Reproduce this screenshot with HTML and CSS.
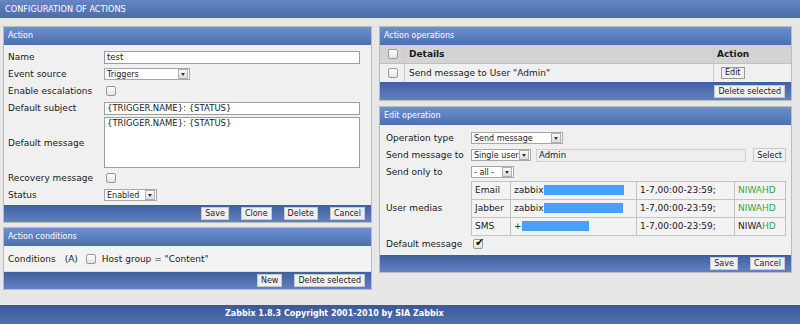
FILE: index.html
```html
<!DOCTYPE html>
<html lang="en">
<head>
  <meta charset="UTF-8">
  <title>Configuration of actions</title>
  <link rel="stylesheet" href="styles.css">
</head>
<body>

  <div class="topbar">CONFIGURATION OF ACTIONS</div>

  <div class="page">
    <div class="col col-left">

      <div class="panel">
        <div class="panel-head">Action</div>
        <div class="form action-form">
          <div class="label">Name</div>
          <div><span class="input wide">test</span></div>

          <div class="label">Event source</div>
          <div><span class="select" style="width:86px">Triggers<span class="arr"></span></span></div>

          <div class="label">Enable escalations</div>
          <div><span class="check"></span></div>

          <div class="label">Default subject</div>
          <div><span class="input wide">{TRIGGER.NAME}: {STATUS}</span></div>

          <div class="label">Default message</div>
          <div class="top"><div class="textarea">{TRIGGER.NAME}: {STATUS}</div></div>

          <div class="label">Recovery message</div>
          <div><span class="check"></span></div>

          <div class="label">Status</div>
          <div><span class="select" style="width:53px">Enabled<span class="arr"></span></span></div>
        </div>
        <div class="panel-foot">
          <button class="btn">Save</button>
          <button class="btn">Clone</button>
          <button class="btn">Delete</button>
          <button class="btn">Cancel</button>
        </div>
      </div>

      <div class="panel">
        <div class="panel-head">Action conditions</div>
        <div class="cond-row">
          <span>Conditions</span>
          <span class="cond-a">(A)</span>
          <span class="check"></span>
          <span>Host group = "Content"</span>
        </div>
        <div class="panel-foot">
          <button class="btn">New</button>
          <button class="btn">Delete selected</button>
        </div>
      </div>

    </div>

    <div class="col col-right">

      <div class="panel">
        <div class="panel-head">Action operations</div>
        <div class="ops">
          <div class="ops-row ops-head">
            <div class="c1"><span class="check"></span></div>
            <div class="c2">Details</div>
            <div class="c3">Action</div>
          </div>
          <div class="ops-row">
            <div class="c1"><span class="check"></span></div>
            <div class="c2">Send message to User "Admin"</div>
            <div class="c3"><button class="btn small">Edit</button></div>
          </div>
        </div>
        <div class="panel-foot tight">
          <button class="btn">Delete selected</button>
        </div>
      </div>

      <div class="panel">
        <div class="panel-head">Edit operation</div>
        <div class="form edit-form">
          <div class="label">Operation type</div>
          <div><span class="select" style="width:92px">Send message<span class="arr"></span></span></div>

          <div class="label">Send message to</div>
          <div class="send-to">
            <span class="select" style="width:60px">Single user<span class="arr"></span></span>
            <span class="input ro">Admin</span>
            <button class="btn">Select</button>
          </div>

          <div class="label">Send only to</div>
          <div><span class="select" style="width:43px">- all -<span class="arr"></span></span></div>

          <div class="label">User medias</div>
          <div class="medias">
            <div class="m-type">Email</div>
            <div class="m-addr">zabbix<span class="hide" style="width:80px"></span></div>
            <div class="m-per">1-7,00:00-23:59;</div>
            <div class="m-sev"><span class="ok">NIWAHD</span></div>

            <div class="m-type">Jabber</div>
            <div class="m-addr">zabbix<span class="hide" style="width:79px"></span></div>
            <div class="m-per">1-7,00:00-23:59;</div>
            <div class="m-sev"><span class="ok">NIWAHD</span></div>

            <div class="m-type">SMS</div>
            <div class="m-addr">+<span class="hide" style="width:67px"></span></div>
            <div class="m-per">1-7,00:00-23:59;</div>
            <div class="m-sev">NIWA<span class="ok">HD</span></div>
          </div>

          <div class="label">Default message</div>
          <div><span class="check on">&#10004;</span></div>
        </div>
        <div class="panel-foot">
          <button class="btn">Save</button>
          <button class="btn">Cancel</button>
        </div>
      </div>

    </div>
  </div>

  <div class="footer">Zabbix 1.8.3 Copyright 2001-2010 by SIA Zabbix</div>

</body>
</html>
```

FILE: styles.css
```css
body {
  margin: 0;
  height: 324px;
  overflow: hidden;
  display: flex;
  flex-direction: column;
  font-family: "DejaVu Sans", Verdana, sans-serif;
  font-size: 9px;
  color: #1a1a1a;
  background-color: #e7e7e7;
}

.topbar {
  height: 18px;
  line-height: 18px;
  padding-left: 5px;
  font-size: 8.2px;
  color: white;
  background: linear-gradient(#6585c3, #4b6cab);
}

.page {
  display: flex;
  align-items: flex-start;
  gap: 7px;
  padding: 8px 0 0 3px;
}

.col {
  display: flex;
  flex-direction: column;
}

.col-left {
  width: 369px;
  gap: 4px;
}

.col-right {
  width: 413px;
  gap: 5px;
}

.panel {
  border: 1px solid #bcbcbc;
  background-color: #f0f0f0;
}

.panel-head {
  height: 18px;
  line-height: 18px;
  padding-left: 4px;
  font-size: 8px;
  color: white;
  background: linear-gradient(#6d90d0, #4c6fb0);
}

.panel-foot {
  height: 17px;
  display: flex;
  justify-content: flex-end;
  align-items: center;
  gap: 12px;
  padding-right: 6px;
  background: linear-gradient(#3f5f9f, #6181c0);
}

.panel-foot.tight {
  height: 18px;
  padding-right: 6px;
}

.btn {
  height: 13px;
  padding: 0 3px;
  font-family: inherit;
  font-size: 8px;
  line-height: 11px;
  color: #222;
  background-color: #f0f0f0;
  border: 1px solid #c8c8c8;
  border-radius: 0;
}

.btn.small {
  height: 12px;
  line-height: 10px;
  padding: 0 3px;
  border-color: #999;
}

/* form grids */

.form {
  display: grid;
  align-items: center;
  row-gap: 1px;
}

.action-form {
  grid-template-columns: 96px 1fr;
  grid-template-rows: 16px 16px 16px 16px 52px 16px 16px;
  padding: 4px 11px 2px 4px;
}

.edit-form {
  grid-template-columns: 85px 1fr;
  grid-template-rows: 16px 16px 16px 54px 16px;
  padding: 5px 5px 3px 6px;
}

.label {
  white-space: nowrap;
}

.top {
  align-self: start;
}

.input {
  display: block;
  height: 11px;
  line-height: 11px;
  padding: 0 2px;
  font-size: 8.5px;
  background-color: white;
  border: 1px solid #9d9d9d;
  white-space: nowrap;
}

.input.ro {
  flex: 1;
  background-color: #eeeeee;
  border-color: #d0d0d0;
}

.textarea {
  height: 49px;
  padding: 0 2px;
  font-size: 8.5px;
  background-color: white;
  border: 1px solid #9d9d9d;
}

.select {
  display: flex;
  align-items: center;
  justify-content: space-between;
  box-sizing: border-box;
  height: 12px;
  padding-left: 2px;
  font-size: 8px;
  background-color: white;
  border: 1px solid #a8a8a8;
  white-space: nowrap;
  overflow: hidden;
}

.arr {
  flex: none;
  width: 8px;
  height: 8px;
  margin-right: 1px;
  border: 1px solid #b0b0b0;
  background: linear-gradient(#fafafa, #dcdcdc);
  position: relative;
}

.arr::after {
  content: "";
  position: absolute;
  left: 1.5px;
  top: 3px;
  border-left: 2.5px solid transparent;
  border-right: 2.5px solid transparent;
  border-top: 3px solid #333;
}

.check {
  display: inline-block;
  width: 8px;
  height: 8px;
  margin-left: 2px;
  vertical-align: middle;
  border: 1px solid #999;
  border-radius: 2px;
  background: linear-gradient(#ffffff, #e2e2e2);
  position: relative;
}

.check.on {
  font-size: 11px;
  line-height: 6px;
  text-indent: 1px;
  color: #111;
  overflow: visible;
}

/* action conditions */

.cond-row {
  height: 25px;
  display: flex;
  align-items: center;
  gap: 6px;
  padding-left: 4px;
  background-color: #f3f3f3;
  border-bottom: 1px solid #dcdcdc;
}

.cond-a {
  margin-left: 3px;
}

/* operations table */

.ops-row {
  display: grid;
  grid-template-columns: 24px 1fr 78px;
  height: 18px;
}

.ops-row > div {
  display: flex;
  align-items: center;
  border-left: 1px solid #c9c9c9;
}

.ops-row > div.c1 {
  border-left: none;
  justify-content: center;
}

.ops-row .c2 {
  padding-left: 4px;
}

.ops-row .c3 {
  padding-left: 7px;
}

.ops-head {
  font-weight: bold;
  background-color: #d3d3d3;
  border-bottom: 1px solid #c0c0c0;
}

.ops-head .c3 {
  padding-left: 3px;
}

/* edit operation */

.send-to {
  display: flex;
  align-items: center;
  gap: 5px;
}

.send-to .btn {
  height: 14px;
  margin-left: 2px;
}

.medias {
  display: grid;
  grid-template-columns: 39px 126px 98px 1fr;
  grid-auto-rows: 18px;
  align-self: center;
  border-top: 1px solid #c3c3c3;
  border-left: 1px solid #c3c3c3;
  background-color: #f3f3f3;
}

.medias > div {
  display: flex;
  align-items: center;
  padding-left: 3px;
  border-right: 1px solid #c3c3c3;
  border-bottom: 1px solid #c3c3c3;
  white-space: nowrap;
}

.hide {
  display: inline-block;
  height: 10px;
  background-color: #47a0fa;
}

.ok {
  color: #3aa53a;
}

.footer {
  margin-top: auto;
  height: 19px;
  line-height: 17px;
  padding-left: 225px;
  font-size: 8px;
  font-weight: bold;
  color: white;
  background: linear-gradient(#3a5995, #4f6fae);
}
```
